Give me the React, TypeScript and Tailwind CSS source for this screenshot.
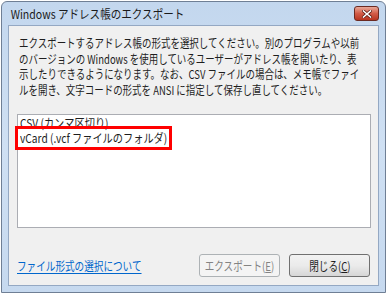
import type { ReactNode } from "react";

const font = { fontFamily: '"Noto Sans CJK JP", "Noto Sans", sans-serif' };

const lines = [
  "エクスポートするアドレス帳の形式を選択してください。別のプログラムや以前",
  "のバージョンの Windows を使用しているユーザーがアドレス帳を開いたり、表",
  "示したりできるようになります。なお、CSV ファイルの場合は、メモ帳でファイ",
  "ルを開き、文字コードの形式を ANSI に指定して保存し直してください。",
];

export default function App() {
  return (
    <div className="h-[293px] w-[386px] overflow-hidden bg-white" style={font}>
      <div className="ml-px mt-px flex h-[292px] w-[385px] flex-col rounded-t-[6px] border border-[#6f7f95] bg-gradient-to-b from-[#c3d7ee] via-[#cfe0f3] to-[#c6d9ef] px-[6px] pb-[6px]">
        <TitleBar />
        <div className="flex flex-1 flex-col overflow-hidden border border-[#94a8c3] bg-[#f0f0f0] px-[8px]">
          <div className="mt-[9px] pl-[2px] text-[12px] leading-[15.5px] text-[#1e1e1e]">
            {lines.map((l) => (
              <div key={l} className="origin-left scale-x-[0.79] whitespace-nowrap">{l}</div>
            ))}
          </div>
          <div className="relative mt-[17px] h-[114px] w-[354px] border border-[#abadb3] bg-white px-[2px] text-[12px] leading-[15px] text-[#1e1e1e]">
            <div className="origin-left scale-x-[0.85] whitespace-nowrap">CSV (カンマ区切り)</div>
            <div className="origin-left scale-x-[0.85] whitespace-nowrap">vCard (.vcf ファイルのフォルダ)</div>
            <div className="absolute left-[-3px] top-[11px] h-[24px] w-[157px] border-[3px] border-[#ff0000]" />
          </div>
          <div className="mt-auto mb-[8px] flex items-center">
            <a className="origin-left scale-x-[0.8] whitespace-nowrap text-[12px] text-[#0066cc] underline underline-offset-2">
              ファイル形式の選択について
            </a>
            <div className="ml-auto flex gap-[9px]">
              <Button disabled>
                エクスポート(<span className="underline">E</span>)
              </Button>
              <Button>
                閉じる(<span className="underline">C</span>)
              </Button>
            </div>
          </div>
        </div>
      </div>
    </div>
  );
}

function TitleBar() {
  return (
    <div className="flex h-[23px] items-center">
      <span className="origin-left scale-x-[0.88] whitespace-nowrap pl-[3px] text-[12px] text-[#1a1a1a]">
        Windows アドレス帳のエクスポート
      </span>
      <div className="ml-auto flex h-[15px] w-[25px] items-center justify-center rounded-[3px] border border-[#6b2a22] bg-gradient-to-b from-[#e8a898] via-[#d25b47] to-[#b8341f]">
        <svg width="10" height="8" viewBox="0 0 10 8">
          <path d="M1.5 1 L8.5 7 M8.5 1 L1.5 7" stroke="#5a1a12" strokeWidth="3" strokeLinecap="square" />
          <path d="M1.5 1 L8.5 7 M8.5 1 L1.5 7" stroke="#ffffff" strokeWidth="1.6" strokeLinecap="square" />
        </svg>
      </div>
    </div>
  );
}

function Button({ children, disabled }: { children: ReactNode; disabled?: boolean }) {
  return (
    <div
      className={
        disabled
          ? "flex h-[23px] w-[81px] items-center justify-center rounded-[3px] border border-[#adb2b5] bg-[#f4f4f4] text-[12px] text-[#838383]"
          : "flex h-[23px] w-[81px] items-center justify-center rounded-[3px] border border-[#707070] bg-gradient-to-b from-[#f2f2f2] via-[#ebebeb] to-[#d6d6d6] text-[12px] text-[#1e1e1e]"
      }
    >
      <span className="scale-x-[0.8] whitespace-nowrap">{children}</span>
    </div>
  );
}
